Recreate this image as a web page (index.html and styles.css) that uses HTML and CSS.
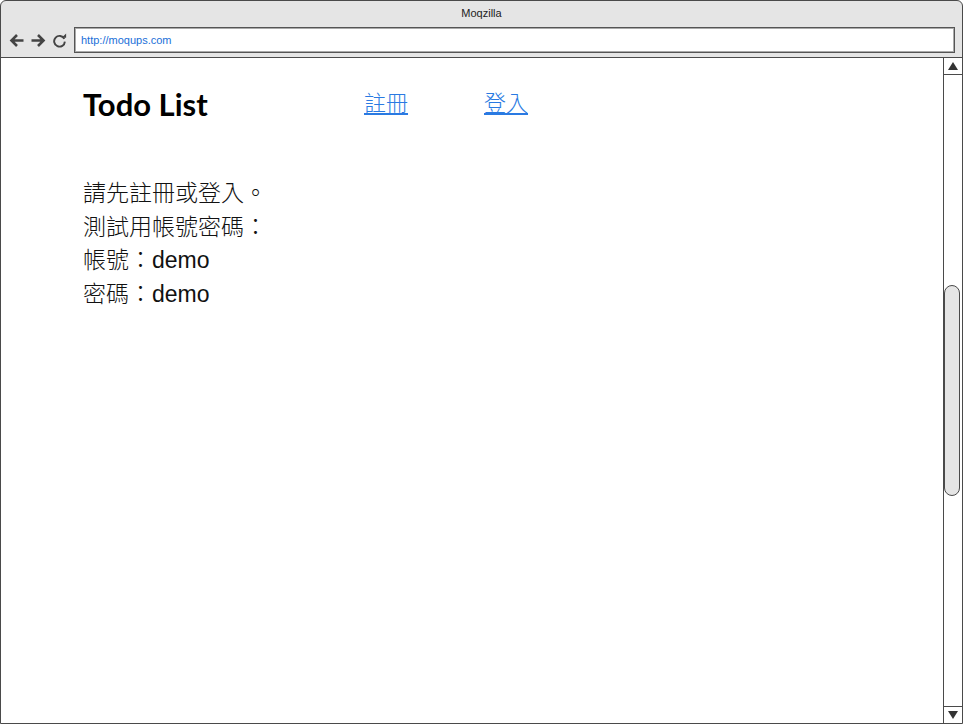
FILE: index.html
```html
<!DOCTYPE html>
<html>
<head>
<meta charset="utf-8">
<link rel="stylesheet" href="styles.css">
</head>
<body>
<div class="window">
  <div class="chrome">
    <div class="title">Moqzilla</div>
    <div class="navrow">
      <div class="navicons">
        <svg class="ico" width="17" height="17" viewBox="0 0 17 17"><path d="M15.5 8.5H3.5M9 3L3.5 8.5 9 14" fill="none" stroke="#444" stroke-width="2.6"/></svg>
        <svg class="ico" width="17" height="17" viewBox="0 0 17 17"><path d="M1.5 8.5h12M8 3l5.5 5.5L8 14" fill="none" stroke="#444" stroke-width="2.6"/></svg>
        <svg class="ico" width="15" height="15" viewBox="0 0 14 14"><path d="M11.5 5.5A5 5 0 1 0 12 8" fill="none" stroke="#444" stroke-width="1.8"/><path d="M9 4.5h4.2V0.5z" fill="#444"/></svg>
      </div>
      <div class="address">http://moqups.com</div>
    </div>
  </div>
  <div class="viewport">
    <div class="page">
      <div class="header">
        <h1 class="brand">Todo List</h1>
        <a class="navlink" href="#">註冊</a>
        <a class="navlink" href="#">登入</a>
      </div>
      <div class="notice">
        <p>請先註冊或登入。</p>
        <p>測試用帳號密碼：</p>
        <p>帳號：demo</p>
        <p>密碼：demo</p>
      </div>
    </div>
    <div class="scrollbar">
      <div class="sbtn"><span class="tri up"></span></div>
      <div class="track"><div class="thumb"></div></div>
      <div class="sbtn bottom"><span class="tri down"></span></div>
    </div>
  </div>
</div>
</body>
</html>
```
FILE: styles.css
```css
html, body { margin: 0; padding: 0; background: #fff; }
.window {
  width: 963px; height: 724px; box-sizing: border-box;
  border: 1px solid #4a4a4a; border-radius: 6px 6px 0 0;
  background: #e5e5e5; display: flex; flex-direction: column; overflow: hidden;
}
.chrome { height: 56px; border-bottom: 1px solid #4a4a4a; display: flex; flex-direction: column; }
.title {
  height: 25px; line-height: 25px; text-align: center;
  font-family: "Liberation Sans", Arial, sans-serif; font-size: 11px; color: #222;
}
.navrow { display: flex; align-items: center; padding: 1px 7px 0 7px; gap: 6px; }
.navicons { display: flex; align-items: center; gap: 5px; width: 60px; }
.ico { display: block; }
.address {
  flex: 1; box-sizing: border-box; height: 26px;
  border: 1px solid #555; box-shadow: inset 0 0 0 1px #aaa; background: #fff;
  font-family: "Liberation Sans", Arial, sans-serif; font-size: 11px; color: #1a6fd8;
  line-height: 24px; padding-left: 6px;
}
.viewport { flex: 1; display: flex; background: #fff; min-height: 0; }
.page { flex: 1; padding: 26px 0 0 82px; }
.header { display: grid; grid-template-columns: 281px 120px auto; align-items: start; }
.brand {
  margin: 0; font-family: Lato, "Liberation Sans", sans-serif; font-weight: 700;
  font-size: 31px; line-height: 40px; color: #000;
}
.navlink {
  font-family: "Noto Sans CJK TC", sans-serif; font-size: 22px; line-height: 34px;
  color: #2a7ae2; text-decoration: underline; justify-self: start; font-weight: 300;
}
.notice { margin-top: 53px; font-family: "Liberation Sans", "Noto Sans CJK TC", sans-serif; font-size: 23px; font-weight: 300; color: #111; }
.notice p { margin: 0; line-height: 33.5px; }
.scrollbar {
  width: 18px; border-left: 1px solid #4a4a4a; display: flex; flex-direction: column; background: #fff;
}
.sbtn { height: 16px; border-bottom: 1px solid #4a4a4a; display: flex; align-items: center; justify-content: center; }
.sbtn.bottom { border-bottom: 0; border-top: 1px solid #4a4a4a; }
.tri { width: 0; height: 0; border-left: 5px solid transparent; border-right: 5px solid transparent; }
.tri.up { border-bottom: 8px solid #333; }
.tri.down { border-top: 8px solid #333; }
.track { flex: 1; padding-top: 210px; }
.thumb {
  width: 16px; height: 211px; box-sizing: border-box; background: #e5e5e5;
  border: 1px solid #4a4a4a; border-radius: 8px;
}
```
